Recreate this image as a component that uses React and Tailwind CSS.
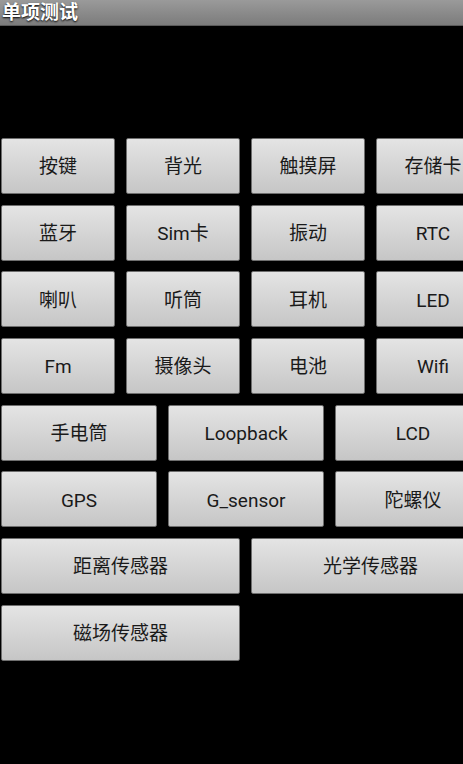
import React from 'react';

const rows = [
  { w: 'w-[114px]', items: ['按键', '背光', '触摸屏', '存储卡'] },
  { w: 'w-[114px]', items: ['蓝牙', 'Sim卡', '振动', 'RTC'] },
  { w: 'w-[114px]', items: ['喇叭', '听筒', '耳机', 'LED'] },
  { w: 'w-[114px]', items: ['Fm', '摄像头', '电池', 'Wifi'] },
  { w: 'w-[156px]', items: ['手电筒', 'Loopback', 'LCD'] },
  { w: 'w-[156px]', items: ['GPS', 'G_sensor', '陀螺仪'] },
  { w: 'w-[239px]', items: ['距离传感器', '光学传感器'] },
  { w: 'w-[239px]', items: ['磁场传感器'] },
];

const TestButton = ({ label, width }) => (
  <button
    className={`${width} h-[56px] shrink-0 flex items-center justify-center pt-[3px] rounded-[2px] border border-[#6e6e6e] bg-gradient-to-b from-[#e4e4e4] to-[#c6c6c6] text-[19px] text-[#1a1a1a]`}
  >
    {label}
  </button>
);

const App = () => {
  return (
    <div
      className="w-[463px] h-[764px] overflow-hidden bg-black"
      style={{ fontFamily: 'Roboto, "Noto Sans CJK SC", sans-serif' }}
    >
      {/* Title bar */}
      <div className="h-[26px] bg-gradient-to-b from-[#9a9a9a] to-[#7c7c7c] border-b border-[#5a5a5a] flex items-center px-[2px]">
        <span className="text-[19px] font-bold leading-none text-white [text-shadow:0_1px_2px_#000]">
          单项测试
        </span>
      </div>

      {/* Button grid */}
      <div className="pt-[112px] pl-[1px] flex flex-col gap-[10.67px]">
        {rows.map((row, i) => (
          <div key={i} className="flex gap-[11px]">
            {row.items.map((label) => (
              <TestButton key={label} label={label} width={row.w} />
            ))}
          </div>
        ))}
      </div>
    </div>
  );
};

export default App;
